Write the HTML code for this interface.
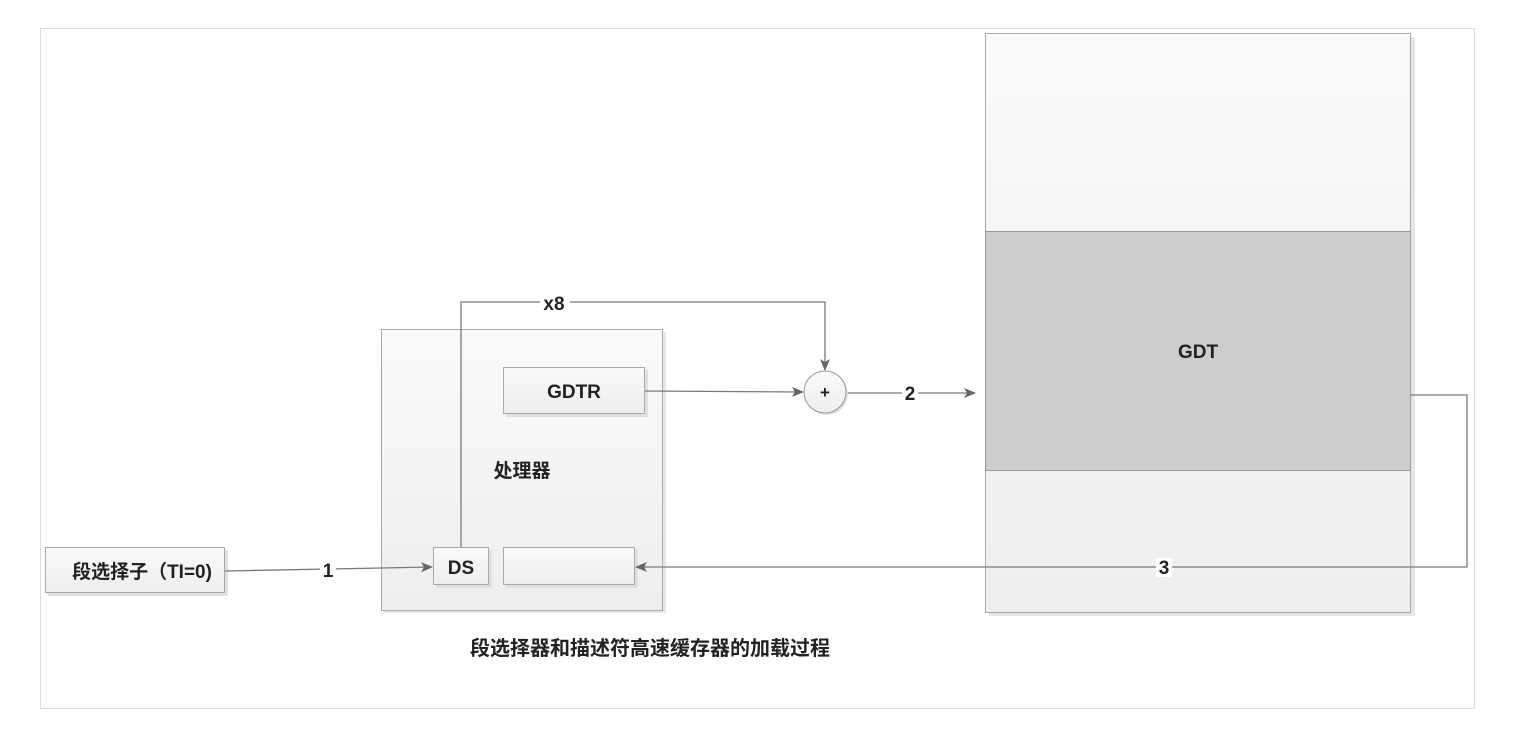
<!DOCTYPE html>
<html><head><meta charset="utf-8"><style>
html,body{margin:0;padding:0;background:#fff;}
svg{display:block;}
text{font-family:"Liberation Sans","Noto Sans CJK SC",sans-serif;font-weight:bold;fill:#222;}
</style></head><body>
<svg width="1520" height="754" viewBox="0 0 1520 754">
<defs>
<linearGradient id="g1" x1="0" y1="0" x2="0" y2="1"><stop offset="0" stop-color="#fafafa"/><stop offset="1" stop-color="#eeeeee"/></linearGradient>
<marker id="ar" markerWidth="12" markerHeight="10" refX="11" refY="5" orient="auto" markerUnits="userSpaceOnUse"><path d="M0,0 L12,5 L0,10 L3,5 Z" fill="#666"/></marker>
</defs>
<rect x="40.5" y="28.5" width="1434" height="680" fill="#fff" stroke="#ddd"/>
<rect x="989" y="37" width="426" height="579" fill="#e6e6e6"/>
<rect x="985.5" y="33.5" width="425" height="579" fill="url(#g1)" stroke="#aaa"/>
<rect x="985.5" y="231.5" width="425" height="239" fill="#cccdcc" stroke="#999"/>
<text x="1198" y="358" font-size="19" text-anchor="middle">GDT</text>
<rect x="384" y="332" width="282" height="281" fill="#e6e6e6"/>
<rect x="381.5" y="329.5" width="281" height="281" fill="url(#g1)" stroke="#aaa"/>
<text x="522" y="477" font-size="19" text-anchor="middle">处理器</text>
<rect x="506" y="370" width="142" height="47" fill="#e0e0e0"/>
<rect x="503.5" y="367.5" width="141" height="46" fill="url(#g1)" stroke="#aaa"/>
<text x="574" y="398" font-size="19" text-anchor="middle">GDTR</text>
<rect x="436" y="550" width="56" height="38" fill="#e0e0e0"/>
<rect x="433.5" y="547.5" width="55" height="37" fill="url(#g1)" stroke="#aaa"/>
<text x="461" y="574" font-size="19" text-anchor="middle">DS</text>
<rect x="506" y="550" width="132" height="38" fill="#e0e0e0"/>
<rect x="503.5" y="547.5" width="131" height="37" fill="url(#g1)" stroke="#aaa"/>
<rect x="48" y="550" width="180" height="46" fill="#e0e0e0"/>
<rect x="45.5" y="547.5" width="179" height="45" fill="url(#g1)" stroke="#aaa"/>
<text x="142" y="578" font-size="19" text-anchor="middle">段选择子（TI=0)</text>
<g stroke="#7a7a7a" stroke-width="1.3" fill="none">
<path d="M461,547 V302 H825 V370" marker-end="url(#ar)"/>
<path d="M645,391 L803,392" marker-end="url(#ar)"/>
<path d="M846,393 H975" marker-end="url(#ar)"/>
<path d="M1411,395 H1467 V567 H636" marker-end="url(#ar)"/>
<path d="M225,571 L432,567" marker-end="url(#ar)"/>
</g>
<circle cx="827" cy="394" r="21" fill="#e0e0e0"/>
<circle cx="825" cy="392" r="21" fill="url(#g1)" stroke="#999"/>
<text x="825" y="398" font-size="17" text-anchor="middle">+</text>
<rect x="540" y="293" width="30" height="18" fill="#fff"/>
<text x="554" y="310" font-size="19" text-anchor="middle">x8</text>
<rect x="902" y="384" width="16" height="18" fill="#fff"/>
<text x="910" y="400" font-size="19" text-anchor="middle">2</text>
<rect x="320" y="561" width="16" height="18" fill="#fff"/>
<text x="328" y="577" font-size="19" text-anchor="middle">1</text>
<rect x="1156" y="558" width="16" height="19" fill="#fff"/>
<text x="1164" y="574" font-size="19" text-anchor="middle">3</text>
<text x="650" y="655" font-size="20" text-anchor="middle">段选择器和描述符高速缓存器的加载过程</text>
</svg>
</body></html>
